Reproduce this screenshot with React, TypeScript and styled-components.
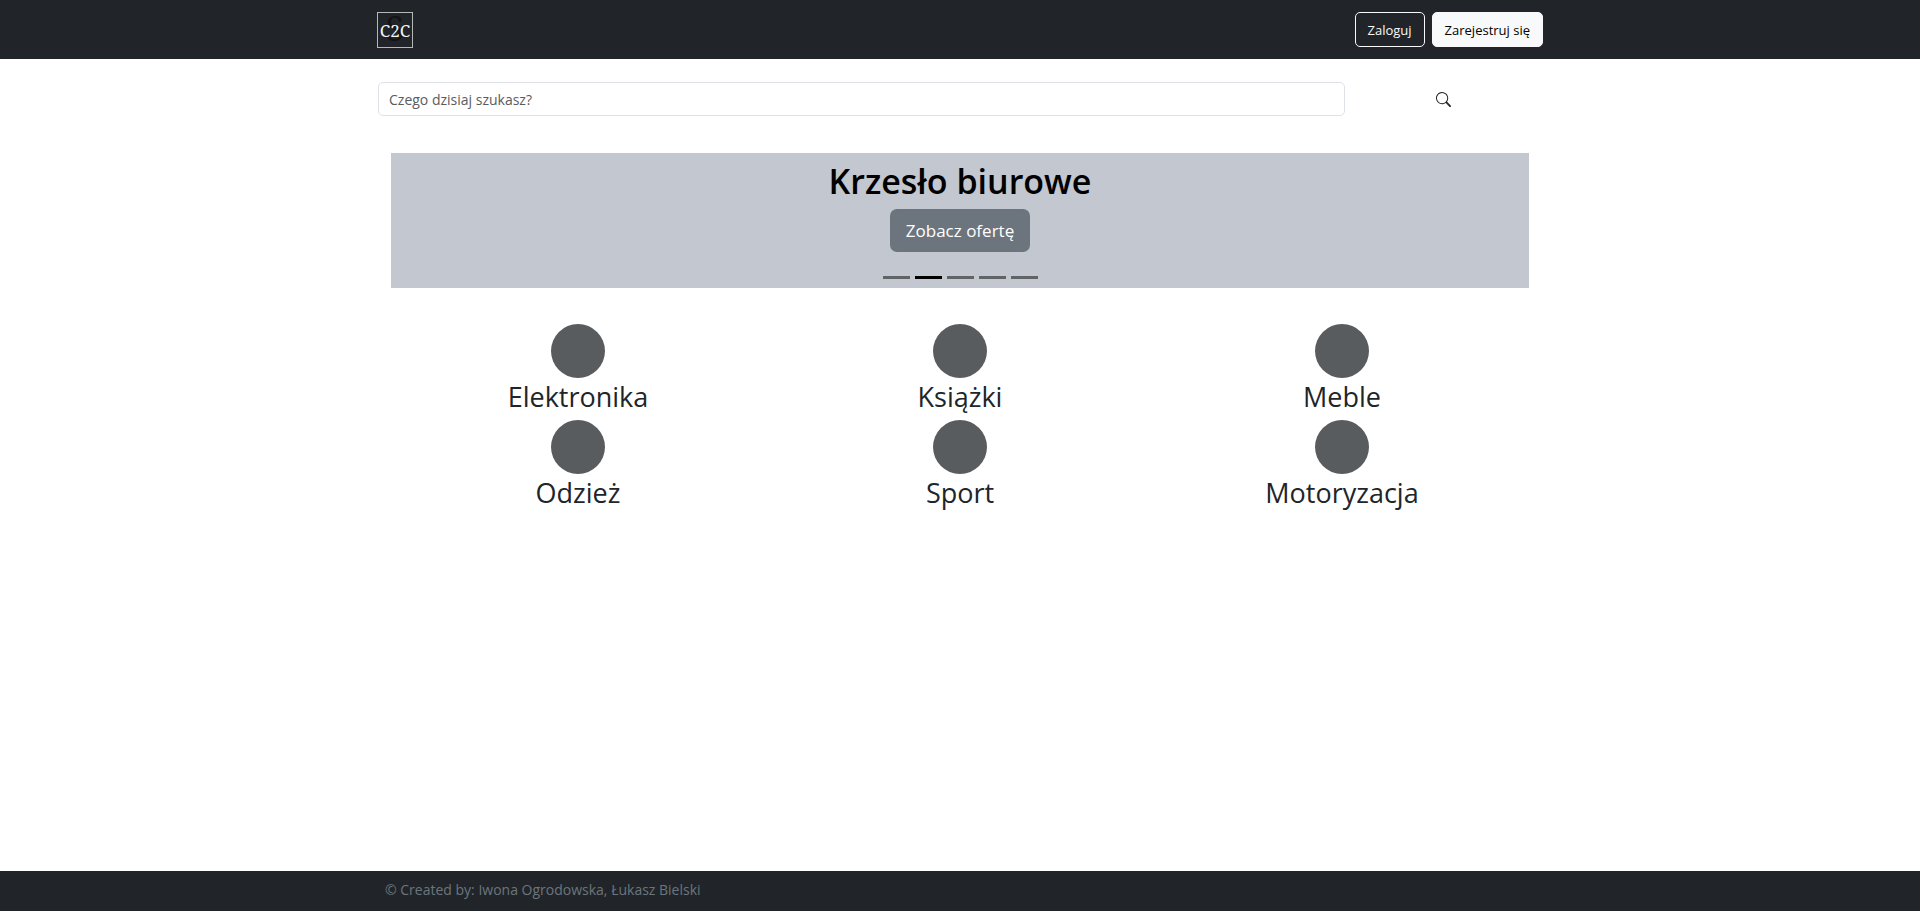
import React from "react";
import styled, { createGlobalStyle } from "styled-components";
import { BsSearch } from "react-icons/bs";

const GlobalStyle = createGlobalStyle`
  *, *::before, *::after { box-sizing: border-box; }
  body {
    margin: 0;
    background: #fff;
    color: #212529;
    font-family: "Segoe UI", "Open Sans", "Noto Sans", sans-serif;
    font-size: 14px;
    line-height: 20px;
  }
  button, input { font: inherit; }
`;

const Page = styled.div`
  display: flex;
  flex-direction: column;
  min-height: 100vh;
`;

const Container = styled.div`
  width: 100%;
  max-width: 1188px;
  margin: 0 auto;
  padding: 0 11px;
`;

const Header = styled.header`
  background: #212529;
  padding: 12px 0 11px;
`;

const HeaderRow = styled(Container)`
  display: flex;
  align-items: flex-start;
  justify-content: space-between;
`;

const LogoLink = styled.a`
  display: block;
  height: 36px;
`;

const LogoImage = styled.svg`
  display: block;
  overflow: visible;
`;

const AuthButtons = styled.nav`
  display: flex;
  gap: 7px;
`;

const AuthButton = styled.button<{ $filled?: boolean }>`
  height: 35px;
  padding: 0 12px;
  border: 1px solid #f8f9fa;
  border-radius: 5px;
  background: ${(p) => (p.$filled ? "#f8f9fa" : "transparent")};
  color: ${(p) => (p.$filled ? "#000" : "#f8f9fa")};
  font-size: 13px;
  cursor: pointer;
`;

const Main = styled.main`
  flex: 1;
`;

const SearchForm = styled.form`
  display: grid;
  grid-template-columns: 1fr 197px;
  align-items: center;
  margin: 23px 1px 37px;
`;

const SearchInput = styled.input`
  height: 34px;
  width: 100%;
  padding: 0 10px;
  border: 1px solid #dee2e6;
  border-radius: 5px;
  background: #fff;
  color: #212529;
  &::placeholder { color: #595c5f; opacity: 1; }
`;

const SearchButton = styled.button`
  display: flex;
  justify-self: center;
  padding: 8px;
  border: 0;
  background: transparent;
  color: #212529;
  cursor: pointer;
`;

const Carousel = styled.section`
  display: flex;
  flex-direction: column;
  align-items: center;
  margin: 0 14px;
  padding: 7px 0 9px;
  background: #c3c7cf;
`;

const SlideTitle = styled.h1`
  margin: 0 0 6px;
  color: #000;
  font-size: 34px;
  font-weight: 600;
  line-height: 43px;
`;

const OfferButton = styled.button`
  height: 43px;
  padding: 0 16px;
  border: 0;
  border-radius: 7px;
  background: #6c757d;
  color: #fff;
  font-size: 17px;
  cursor: pointer;
`;

const Indicators = styled.div`
  display: flex;
  gap: 5px;
  margin-top: 24px;
`;

const Indicator = styled.button<{ $active: boolean }>`
  width: 27px;
  height: 3px;
  padding: 0;
  border: 0;
  background: ${(p) => (p.$active ? "#000" : "#616467")};
  cursor: pointer;
`;

const Categories = styled.section`
  display: grid;
  grid-template-columns: repeat(3, 1fr);
  margin: 36px 10px 27px;
`;

const Category = styled.a`
  display: flex;
  flex-direction: column;
  align-items: center;
  padding-bottom: 4px;
  color: #212529;
  font-size: 27px;
  line-height: 38px;
  text-decoration: none;
`;

const CategoryDot = styled.span`
  width: 54px;
  height: 54px;
  border-radius: 50%;
  background: #585c5f;
`;

const Footer = styled.footer`
  background: #212529;
  color: #6c757d;
  padding: 9px 0 11px;
`;

const Credits = styled.p`
  margin: 0 8px;
`;

const Logo = () => (
  <LogoImage width="36" height="36" viewBox="0 0 36 36" role="img" aria-label="C2C">
    <rect x="0.5" y="0.5" width="35" height="35" fill="none" stroke="#b4b9b8" />
    <g textAnchor="middle" fontFamily="'Noto Serif', 'DejaVu Serif Condensed', 'Liberation Serif', serif">
      <text x="18" y="29" fontSize="34" fill="#121517">S</text>
      <text x="18" y="25" fontSize="17" fill="#f4f4f4">C2C</text>
    </g>
  </LogoImage>
);

const slides = [1, 2, 3, 4, 5];
const activeSlide = 2;
const categories = ["Elektronika", "Książki", "Meble", "Odzież", "Sport", "Motoryzacja"];

export default function App() {
  return (
    <Page>
      <GlobalStyle />
      <Header>
        <HeaderRow>
          <LogoLink href="#"><Logo /></LogoLink>
          <AuthButtons>
            <AuthButton type="button">Zaloguj</AuthButton>
            <AuthButton type="button" $filled>Zarejestruj się</AuthButton>
          </AuthButtons>
        </HeaderRow>
      </Header>
      <Main>
        <Container>
          <SearchForm onSubmit={(e) => e.preventDefault()}>
            <SearchInput type="search" aria-label="Czego dzisiaj szukasz?" placeholder="Czego dzisiaj szukasz?" />
            <SearchButton type="submit" aria-label="Szukaj"><BsSearch size={15} /></SearchButton>
          </SearchForm>
          <Carousel>
            <SlideTitle>Krzesło biurowe</SlideTitle>
            <OfferButton type="button">Zobacz ofertę</OfferButton>
            <Indicators>
              {slides.map((n) => (
                <Indicator key={n} type="button" aria-label={`Slajd ${n}`} $active={n === activeSlide} />
              ))}
            </Indicators>
          </Carousel>
          <Categories>
            {categories.map((name) => (
              <Category key={name} href="#">
                <CategoryDot />
                {name}
              </Category>
            ))}
          </Categories>
        </Container>
      </Main>
      <Footer>
        <Container>
          <Credits>© Created by: Iwona Ogrodowska, Łukasz Bielski</Credits>
        </Container>
      </Footer>
    </Page>
  );
}
